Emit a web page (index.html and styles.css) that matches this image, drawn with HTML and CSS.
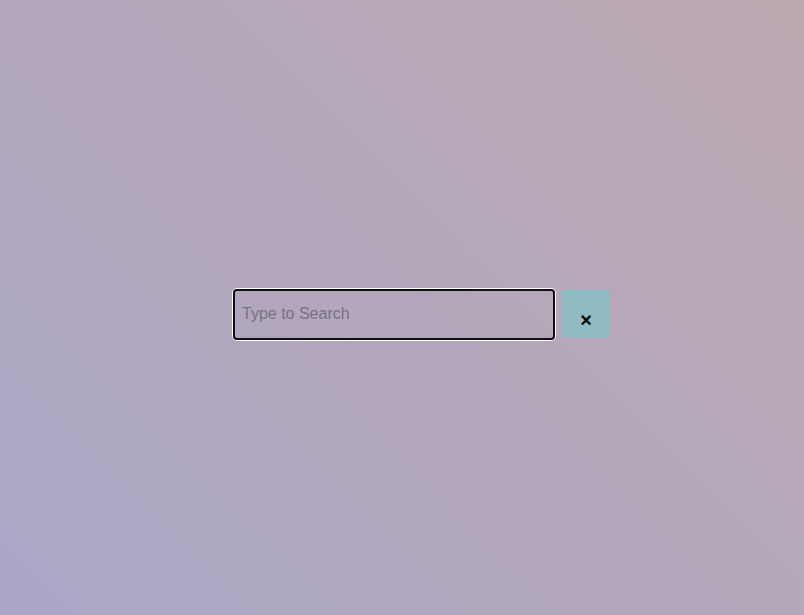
FILE: index.html
```html
<!DOCTYPE html>
<html>
<head>
<meta charset="utf-8">
<link rel="stylesheet" href="styles.css">
</head>
<body>
<div class="page">
  <div class="search">
    <input class="search-input" type="text" placeholder="Type to Search">
    <button class="clear-btn" type="button">×</button>
  </div>
</div>
</body>
</html>
```
FILE: styles.css
```css
html, body {
  margin: 0;
  padding: 0;
  height: 100%;
}
body {
  background: linear-gradient(45deg, #a9a6c6 0%, #b3a7bb 50%, #bba9b1 100%);
  font-family: "Liberation Sans", Arial, sans-serif;
}
.page {
  height: 615px;
  box-sizing: border-box;
  padding: 289px 0 0 233px;
}
.search {
  display: flex;
  align-items: flex-start;
  gap: 7px;
}
.search-input {
  box-sizing: border-box;
  width: 322px;
  height: 51px;
  margin: 0;
  padding: 0 0 2px 7px;
  border: 2px solid #101010;
  border-radius: 4px;
  background: transparent;
  box-shadow: 0 0 0 1px #ffffff;
  font-family: "Liberation Sans", Arial, sans-serif;
  font-size: 16px;
  color: #222;
  outline: none;
}
.search-input::placeholder {
  color: #787280;
}
.clear-btn {
  box-sizing: border-box;
  width: 48px;
  height: 48px;
  margin-top: 1px;
  padding: 12px 0 0 0;
  border: none;
  border-radius: 3px;
  background: #8fbcc4;
  color: #000;
  font-family: "Liberation Sans", Arial, sans-serif;
  font-size: 20px;
  font-weight: bold;
  line-height: 1;
  cursor: pointer;
}
```
